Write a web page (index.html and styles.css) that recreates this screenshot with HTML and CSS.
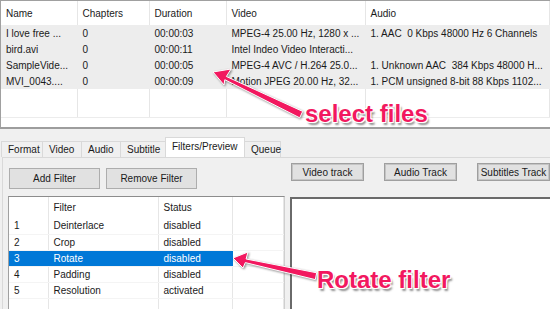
FILE: index.html
```html
<!DOCTYPE html>
<html lang="en">
<head>
  <meta charset="UTF-8">
  <title>Converter - filters</title>
  <link rel="stylesheet" href="styles.css">
</head>
<body>
<div class="files">
  <table class="grid">
    <tr class="head">
      <td class="c-name">Name</td>
      <td class="c-chap">Chapters</td>
      <td class="c-dur">Duration</td>
      <td class="c-video">Video</td>
      <td class="c-audio">Audio</td>
    </tr>
    <tr class="sel">
      <td>I love free ...</td><td>0</td><td>00:00:03</td>
      <td>MPEG-4 25.00 Hz, 1280 x ...</td><td>1. AAC&nbsp; 0 Kbps 48000 Hz 6 Channels</td>
    </tr>
    <tr class="sel">
      <td>bird.avi</td><td>0</td><td>00:00:11</td>
      <td>Intel Indeo Video Interacti...</td><td></td>
    </tr>
    <tr class="sel">
      <td>SampleVide...</td><td>0</td><td>00:00:05</td>
      <td>MPEG-4 AVC / H.264 25.0...</td><td>1. Unknown AAC&nbsp; 384 Kbps 48000 H...</td>
    </tr>
    <tr class="sel">
      <td>MVI_0043....</td><td>0</td><td>00:00:09</td>
      <td>Motion JPEG 20.00 Hz, 32...</td><td>1. PCM unsigned 8-bit 88 Kbps 1102...</td>
    </tr>
    <tr class="blank">
      <td></td><td></td><td></td><td></td><td></td>
    </tr>
  </table>
</div>

<div class="tabs">
  <div class="tab">Format</div>
  <div class="tab">Video</div>
  <div class="tab">Audio</div>
  <div class="tab">Subtitle</div>
  <div class="tab active">Filters/Preview</div>
  <div class="tab">Queue</div>
</div>

<div class="pane">
  <div class="left">
    <div class="btn-row">
      <button class="btn">Add Filter</button>
      <button class="btn">Remove Filter</button>
    </div>
    <div class="flist">
      <table class="grid fgrid">
        <tr class="head">
          <td class="c-num"></td>
          <td class="c-filter">Filter</td>
          <td class="c-status">Status</td>
          <td></td>
        </tr>
        <tr><td>1</td><td>Deinterlace</td><td>disabled</td><td></td></tr>
        <tr><td>2</td><td>Crop</td><td>disabled</td><td></td></tr>
        <tr class="picked"><td>3</td><td>Rotate</td><td>disabled</td><td class="nopick"></td></tr>
        <tr><td>4</td><td>Padding</td><td>disabled</td><td></td></tr>
        <tr><td>5</td><td>Resolution</td><td>activated</td><td></td></tr>
        <tr class="empty"><td></td><td></td><td></td><td></td></tr>
      </table>
    </div>
  </div>
  <div class="right">
    <div class="track-row">
      <button class="tbtn">Video track</button>
      <button class="tbtn">Audio Track</button>
      <button class="tbtn">Subtitles Track</button>
    </div>
    <div class="preview"></div>
  </div>
</div>

<!-- annotations on top of the screenshot -->
<svg class="arrows" width="550" height="309" viewBox="0 0 550 309">
  <polygon points="213,72 231,69 226.4,76.5 302.7,111.4 299.7,117.8 224.8,79.7 224,85"/>
  <polygon points="233,258 248,252 246.1,259 316.7,272.8 315.3,279.6 245.3,262.6 243,268"/>
</svg>
<div class="note note-files">select files</div>
<div class="note note-rotate">Rotate filter</div>
</body>
</html>
```

FILE: styles.css
```css
* {
  box-sizing: border-box;
}

body {
  margin: 0;
  width: 550px;
  height: 309px;
  overflow: hidden;
  position: relative;
  background: #f0f0f0;
  font-family: "Liberation Sans", Arial, sans-serif;
  font-size: 10px;
  color: #1a1a1a;
}

/* верхний список файлов */
.files {
  height: 129px;
  background: #fff;
  border-top: 1px solid #a0a0a0;
  border-left: 1px solid #a0a0a0;
  border-bottom: 2px solid #9d9d9d;
  overflow: hidden;
}

.grid {
  border-collapse: collapse;
  table-layout: fixed;
  width: 100%;
}

.grid td {
  padding: 0 0 0 5px;
  white-space: nowrap;
  overflow: hidden;
  height: 16px;
  border-right: 1px solid #e6e6e6;
}

.grid .head td {
  height: 24px;
}

.c-name { width: 76px; }
.c-chap { width: 72px; }
.c-dur { width: 77px; }
.c-video { width: 139px; }

.grid .sel td {
  background: #ededed;
  border-right-color: #ededed;
}

.grid .blank td {
  height: 28px;
  border-bottom: 1px solid #ececec;
}

/* вкладки */
.tabs {
  display: flex;
  align-items: flex-end;
  height: 28px;
  padding-left: 1px;
}

.tab {
  height: 16px;
  padding: 0 6px;
  line-height: 15px;
  border: 1px solid #d9d9d9;
  border-bottom: none;
  background: #f0f0f0;
  margin-right: -1px;
}

.tab:nth-child(1) { width: 42px; }
.tab:nth-child(2) { width: 40px; }
.tab:nth-child(3) { width: 40px; }
.tab:nth-child(4) { width: 46px; }
.tab:nth-child(6) { width: 37px; }

.tab.active {
  width: 80px;
  height: 20px;
  line-height: 17px;
  background: #fff;
  position: relative;
  z-index: 1;
}

/* панель фильтров */
.pane {
  display: flex;
  height: 152px;
  margin-left: 2px;
  border-left: 1px solid #d9d9d9;
  border-top: 1px solid #d9d9d9;
  padding-left: 5px;
  background: #f0f0f0;
}

.left {
  width: 277px;
  display: flex;
  flex-direction: column;
}

.btn-row {
  display: flex;
  gap: 6px;
  margin-top: 10px;
  padding-left: 1px;
}

.btn {
  width: 91px;
  height: 21px;
  padding: 0;
  border: 1px solid #adadad;
  background: #e1e1e1;
  font: inherit;
  color: #1a1a1a;
}

.flist {
  margin-top: 7px;
  flex: 1;
  background: #fff;
  border-top: 1px solid #8c8c8c;
  border-left: 1px solid #a0a0a0;
  border-right: 1px solid #cfcfcf;
  overflow: hidden;
}

.fgrid td {
  border-bottom: 1px solid #f4f4f4;
}

.fgrid .head td {
  height: 21px;
  border-bottom: none;
}

.c-num { width: 39px; }
.c-filter { width: 110px; }
.c-status { width: 74px; }

.fgrid .picked td {
  background: #0078d7;
  color: #fff;
  border-right-color: #0078d7;
}

.fgrid .picked td.nopick {
  background: #fff;
  border-right-color: #e6e6e6;
}

.fgrid .empty td {
  height: 17px;
  border-bottom-color: #e6e6e6;
}

.right {
  flex: 1;
  margin-left: 5px;
  display: flex;
  flex-direction: column;
}

.track-row {
  display: flex;
  gap: 20px;
  margin-top: 5px;
  padding-left: 1px;
}

.tbtn {
  width: 73px;
  height: 18px;
  padding: 0;
  flex-shrink: 0;
  border: 2px solid #c4c4c4;
  outline: 1px solid #9f9f9f;
  outline-offset: -1px;
  background: #e1e1e1;
  font: inherit;
  color: #1a1a1a;
}

.preview {
  margin-top: 16px;
  flex: 1;
  background: #fff;
  border-top: 2px solid #6a6a6a;
  border-left: 2px solid #6a6a6a;
}

/* подписи поверх */
.arrows {
  position: absolute;
  top: 0;
  left: 0;
  pointer-events: none;
  filter: drop-shadow(1px 1px 1px rgba(0, 0, 0, 0.45));
}

.arrows polygon {
  fill: #f2185f;
  stroke: #fff;
  stroke-width: 1;
  stroke-linejoin: round;
}

.note {
  position: absolute;
  font-family: "Liberation Sans", Arial, sans-serif;
  font-weight: bold;
  font-size: 24px;
  line-height: 24px;
  color: #f2185f;
  white-space: nowrap;
  text-shadow: -1px -1px 0 #fff, 1px -1px 0 #fff, -1px 1px 0 #fff, 1px 1px 0 #fff,
    2px 3px 2px rgba(0, 0, 0, 0.45);
}

.note-files {
  left: 305px;
  top: 102px;
}

.note-rotate {
  left: 317px;
  top: 268px;
}
```
